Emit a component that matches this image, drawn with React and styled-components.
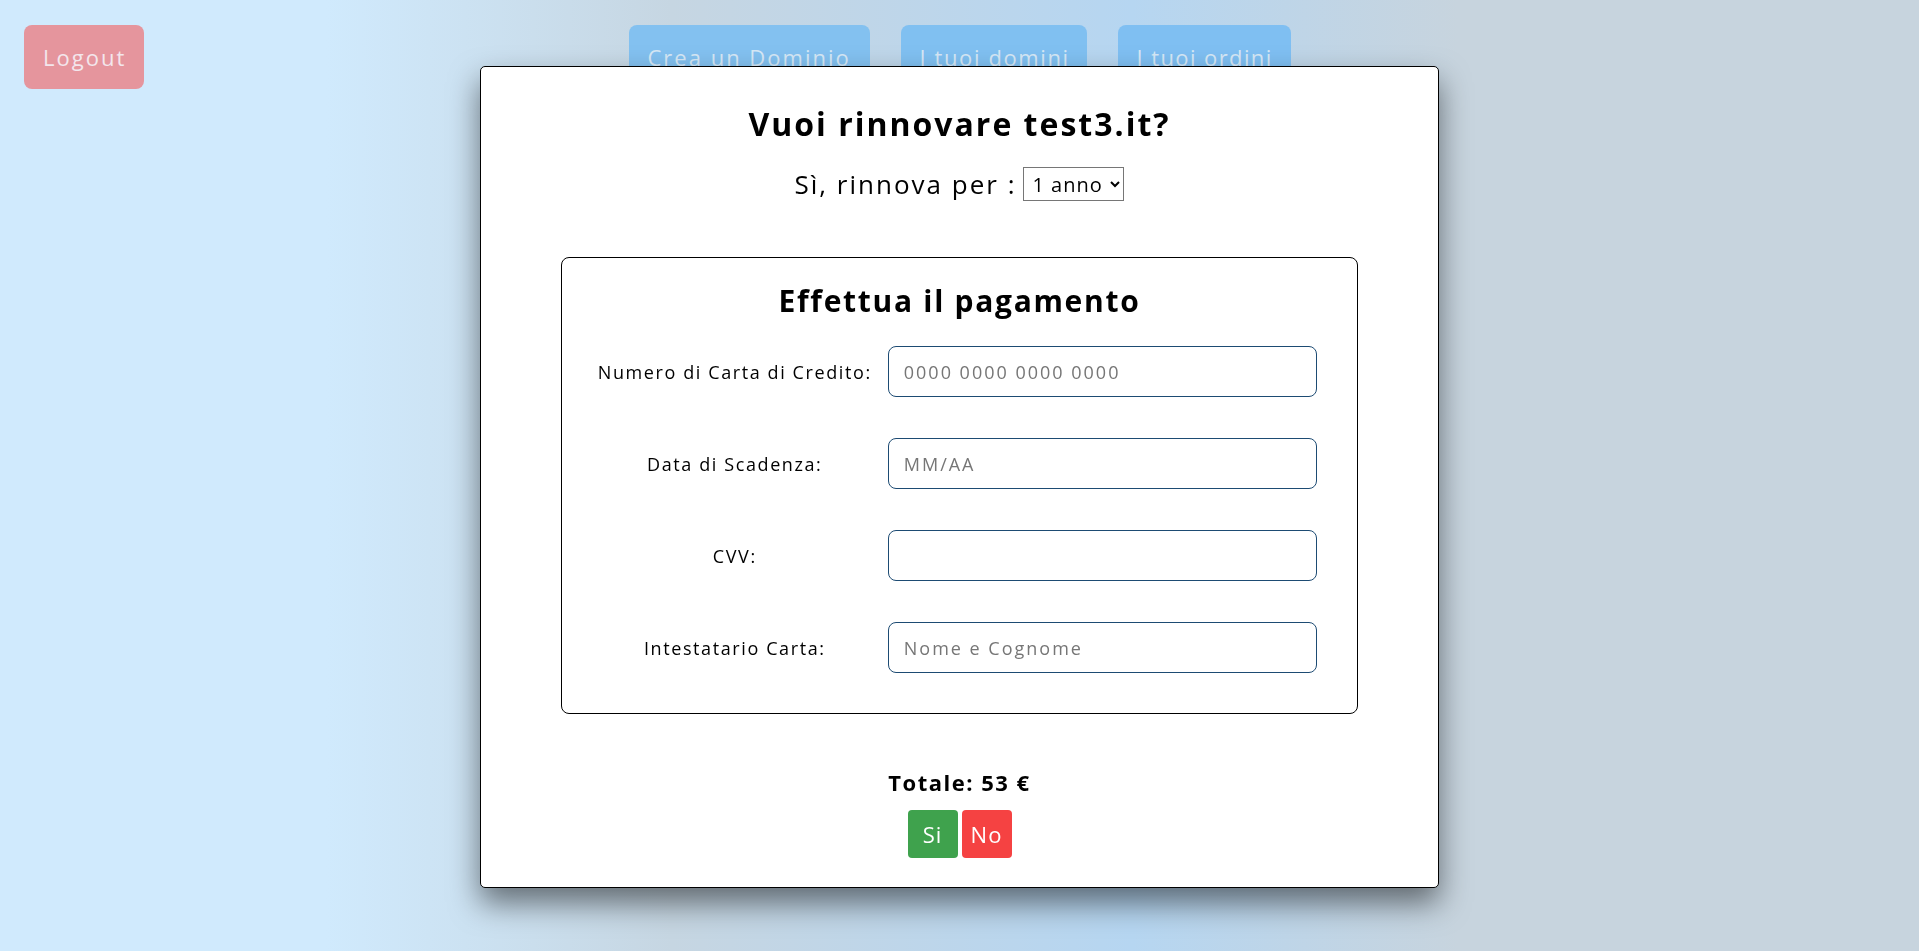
import React from "react";
import styled, { createGlobalStyle } from "styled-components";

const GlobalStyle = createGlobalStyle`
  html, body { margin: 0; padding: 0; }
  body {
    min-height: 100vh;
    font-family: "Open Sans", "Noto Sans", sans-serif;
    background: linear-gradient(
      to right,
      #d0eafd 0%,
      #d0eafd 17%,
      #c6d6e2 35%,
      #b6d6f1 59%,
      #c7d4de 76%,
      #c7d4de 100%
    );
    background-attachment: fixed;
  }
`;

const Page = styled.div`
  min-height: 100vh;
  box-sizing: border-box;
  padding: 25px 24px;
`;

const TopBar = styled.header`
  display: grid;
  grid-template-columns: 1fr auto 1fr;
  align-items: start;
`;

const Nav = styled.nav`
  display: flex;
  gap: 31px;
`;

const BarButton = styled.button`
  justify-self: start;
  box-sizing: border-box;
  width: ${(p) => (p.$w ? `${p.$w}px` : "auto")};
  height: 64px;
  padding: 0 19px;
  border: none;
  border-radius: 8px;
  background: ${(p) => p.$bg};
  color: ${(p) => p.$fg};
  font-family: inherit;
  font-size: 22px;
  letter-spacing: ${(p) => p.$ls ?? 2}px;
  font-weight: 400;
  white-space: nowrap;
  cursor: pointer;
`;

const Overlay = styled.div`
  position: fixed;
  inset: 0;
  display: flex;
  align-items: center;
  justify-content: center;
`;

const Modal = styled.div`
  width: 50%;
  box-sizing: border-box;
  background: #fff;
  border: 1px solid #000;
  border-radius: 5px;
  box-shadow: 0 15px 30px rgba(0, 0, 0, 0.5);
  padding: 33px 20px 29px;
  margin-top: 3px;
  display: flex;
  flex-direction: column;
  align-items: center;
  color: #000;
`;

const Title = styled.h1`
  margin: 0;
  font-size: 32px;
  line-height: 48px;
  font-weight: 700;
  letter-spacing: 2px;
`;

const RenewRow = styled.div`
  margin-top: 19px;
  display: flex;
  align-items: center;
  gap: 7px;
  font-size: 26px;
  letter-spacing: 2px;
  height: 34px;
`;

const Select = styled.select`
  height: 34px;
  font-family: inherit;
  font-size: 20px;
  letter-spacing: 1px;
  border: 1px solid #767676;
  border-radius: 0;
  background: #fff;
  color: #000;
  padding: 0 4px;
`;

const PayBox = styled.section`
  align-self: stretch;
  margin: 56px 60px 0;
  border: 1px solid #000;
  border-radius: 8px;
  padding: 21px 40px 40px 20px;
  display: flex;
  flex-direction: column;
  align-items: center;
`;

const PayTitle = styled.h2`
  margin: 0 0 23px 20px;
  font-size: 30px;
  line-height: 44px;
  font-weight: 700;
  letter-spacing: 1.7px;
`;

const FieldGrid = styled.div`
  align-self: stretch;
  display: grid;
  grid-template-columns: 306px 1fr;
  row-gap: 41px;
  align-items: center;
`;

const Label = styled.label`
  text-align: center;
  font-size: 18px;
  letter-spacing: 1.6px;
  color: #000;
`;

const Input = styled.input`
  box-sizing: border-box;
  width: 100%;
  height: 51px;
  border: 1px solid #1d4b73;
  border-radius: 8px;
  padding: 0 15px;
  font-family: inherit;
  font-size: 18px;
  letter-spacing: 2px;
  color: #000;
  background: #fff;
  outline: none;
  &::placeholder { color: #767676; }
`;

const Total = styled.div`
  margin-top: 52px;
  font-size: 22px;
  line-height: 33px;
  font-weight: 700;
  letter-spacing: 1.5px;
`;

const Actions = styled.div`
  margin-top: 11px;
  display: flex;
  gap: 4px;
`;

const ActionButton = styled.button`
  width: 50px;
  height: 48px;
  padding: 0;
  border: none;
  border-radius: 4px;
  background: ${(p) => p.$bg};
  color: #fff;
  font-family: inherit;
  font-size: 22px;
  letter-spacing: 1px;
  cursor: pointer;
`;

const fields = [
  { label: "Numero di Carta di Credito:", placeholder: "0000 0000 0000 0000" },
  { label: "Data di Scadenza:", placeholder: "MM/AA" },
  { label: "CVV:", placeholder: "" },
  { label: "Intestatario Carta:", placeholder: "Nome e Cognome" },
];

export default function App() {
  return (
    <>
      <GlobalStyle />
      <Page>
        <TopBar>
          <BarButton $bg="#e5959d" $fg="#f3e6ec" $w={120}>Logout</BarButton>
          <Nav>
            <BarButton $bg="#83c1f0" $fg="#d6e8f6" $w={241}>Crea un Dominio</BarButton>
            <BarButton $bg="#80c0f1" $fg="#d6e8f6" $w={186} $ls={1.6}>I tuoi domini</BarButton>
            <BarButton $bg="#7fbff2" $fg="#d6e8f6" $w={173} $ls={1.4}>I tuoi ordini</BarButton>
          </Nav>
          <div />
        </TopBar>
      </Page>
      <Overlay>
        <Modal>
          <Title>Vuoi rinnovare test3.it?</Title>
          <RenewRow>
            <span>Sì, rinnova per :</span>
            <Select defaultValue="1">
              <option value="1">1 anno</option>
              <option value="2">2 anni</option>
              <option value="3">3 anni</option>
            </Select>
          </RenewRow>
          <PayBox>
            <PayTitle>Effettua il pagamento</PayTitle>
            <FieldGrid>
              {fields.map((f) => (
                <React.Fragment key={f.label}>
                  <Label>{f.label}</Label>
                  <Input placeholder={f.placeholder} />
                </React.Fragment>
              ))}
            </FieldGrid>
          </PayBox>
          <Total>Totale: 53 €</Total>
          <Actions>
            <ActionButton $bg="#3fa24d">Si</ActionButton>
            <ActionButton $bg="#f54242">No</ActionButton>
          </Actions>
        </Modal>
      </Overlay>
    </>
  );
}
